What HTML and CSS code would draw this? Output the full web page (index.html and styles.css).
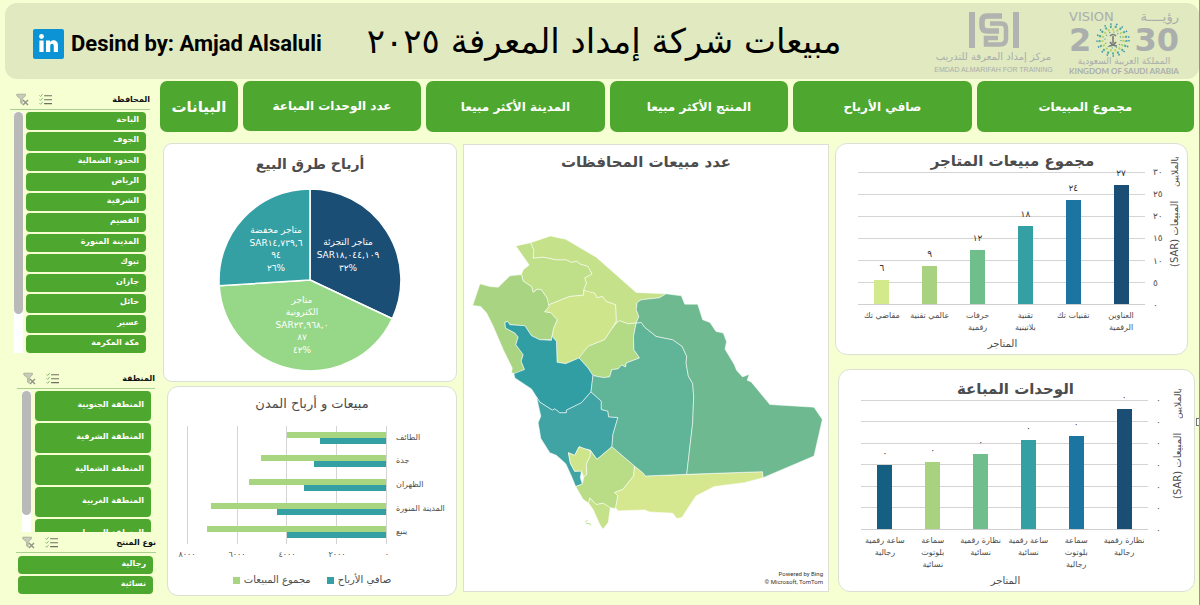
FILE: index.html
```html
<!DOCTYPE html>
<html lang="ar">
<head>
<meta charset="utf-8">
<meta name="viewport" content="width=device-width, initial-scale=1">
<title>مبيعات شركة إمداد المعرفة ٢٠٢٥</title>
<link rel="stylesheet" href="styles.css">
</head>
<body>
<svg class="sprite" aria-hidden="true">
  <symbol id="clear" viewBox="0 0 13 13">
    <path d="M.8 1.2h8.6v1.6L6.2 6v5.2L4.6 10V6L.8 2.800z" fill="#c9cbb9" stroke="#a5a796" stroke-width=".8"/>
    <path d="M7 7l5 5M12 7l-5 5" stroke="#8f9183" stroke-width="1.400"/>
  </symbol>
  <symbol id="multi" viewBox="0 0 14 13">
    <path d="M5.500 2.500H14M5.500 6.700H14M5.500 10.900H14" stroke="#6d7061" stroke-width="1.200"/>
    <path d="M.5 2l1.300 1.300L4 .6M.5 6.200l1.300 1.300L4 4.800M.5 10.400l1.300 1.300L4 9" fill="none" stroke="#86b870" stroke-width="1"/>
  </symbol>
</svg>

<header class="banner">
  <a class="author" href="#">
    <svg class="linkedin" viewBox="0 0 31 30" aria-hidden="true">
      <rect width="31" height="30" rx="2" fill="#0b93d6"/>
      <circle cx="8.500" cy="7.500" r="2.400" fill="#fff"/>
      <path d="M6.400 11.500h4.200V23H6.400zM13 11.500h4v1.600c2-3 8-2.500 8 3V23h-4.200v-6c0-3-3.600-3-3.600 0v6H13z" fill="#fff"/>
    </svg>
    <span>Desind by: Amjad Alsaluli</span>
  </a>
  <h1 dir="rtl">مبيعات شركة إمداد المعرفة ٢٠٢٥</h1>
  <div class="logos">
    <div class="emdad">
      <svg viewBox="0 0 52 36" aria-hidden="true">
        <g fill="none" stroke="#b0b3b0" stroke-width="6">
          <path d="M4 0v36M48 0v36"/>
          <path d="M34 4H19q-5 0-5 5v5q0 5 5 5h12" stroke-width="5.500"/>
          <path d="M22 11.500h11q5 0 5 5v10q0 6-6 6H18v-6.500h12" stroke-width="4.500"/>
        </g>
      </svg>
      <span class="emdad-ar" dir="rtl">مركز إمداد المعرفة للتدريب</span>
      <span class="emdad-en">EMDAD ALMARIFAH FOR TRAINING</span>
    </div>
    <div class="vision">
      <div class="vision-top"><span>VISION</span><span dir="rtl">رؤيــــة</span></div>
      <div class="vision-year">
        <span>2</span>
        <svg viewBox="-18 -18 36 36" aria-hidden="true">
          <g fill="none" stroke-width="2.200">
            <circle r="13.500" stroke="#4fae9c" stroke-dasharray="2 3"/>
            <circle r="10.500" stroke="#b8d25a" stroke-dasharray="1.800 2.600"/>
            <circle r="16" stroke="#3d8fb5" stroke-width="1.500" stroke-dasharray="1.500 4.500"/>
            <circle r="8" stroke="#5aa9a8" stroke-width="1.200" stroke-dasharray="1.200 3"/>
          </g>
          <path d="M0-4V3M-3-4q3-3 6 0M-4 6q4 0 7-4M4 6q-4 0-7-4" fill="none" stroke="#777c78" stroke-width="1.600"/>
        </svg>
        <span>30</span>
      </div>
      <div class="vision-ar" dir="rtl">المملكة العربية السعودية</div>
      <div class="vision-en">KINGDOM OF SAUDI ARABIA</div>
    </div>
  </div>
</header>

<div class="layout">
  <aside class="slicers">
    <section class="slicer slicer-province">
      <div class="slicer-head">
        <button class="tool" aria-label="مسح التصفية"><svg><use href="#clear"/></svg></button>
        <button class="tool" aria-label="تحديد متعدد"><svg><use href="#multi"/></svg></button>
        <h2>المحافظة</h2>
      </div>
      <div class="slicer-body">
        <div class="track"><div class="thumb"></div></div>
        <div class="options">
          <button>الباحة</button><button>الجوف</button><button>الحدود الشمالية</button><button>الرياض</button><button>الشرقية</button><button>القصيم</button><button>المدينة المنورة</button><button>تبوك</button><button>جازان</button><button>حائل</button><button>عسير</button><button>مكة المكرمة</button>
        </div>
      </div>
    </section>
    <section class="slicer slicer-region">
      <div class="slicer-head">
        <button class="tool" aria-label="مسح التصفية"><svg><use href="#clear"/></svg></button>
        <button class="tool" aria-label="تحديد متعدد"><svg><use href="#multi"/></svg></button>
        <h2>المنطقة</h2>
      </div>
      <div class="slicer-body">
        <div class="track"><div class="thumb"></div></div>
        <div class="options">
          <button>المنطقة الجنوبية</button><button>المنطقة الشرقية</button><button>المنطقة الشمالية</button><button>المنطقة الغربية</button><button>المنطقة الوسطى</button>
        </div>
      </div>
    </section>
    <section class="slicer slicer-type">
      <div class="slicer-head">
        <button class="tool" aria-label="مسح التصفية"><svg><use href="#clear"/></svg></button>
        <button class="tool" aria-label="تحديد متعدد"><svg><use href="#multi"/></svg></button>
        <h2>نوع المنتج</h2>
      </div>
      <div class="slicer-body">
        <div class="options"><button>رجالية</button><button>نسائية</button></div>
      </div>
    </section>
  </aside>

  <main class="main">
    <nav class="tabs">
      <button class="tab-data">البيانات</button>
      <button class="tab-units">عدد الوحدات المباعة</button>
      <button>المدينة الأكثر مبيعا</button>
      <button>المنتج الأكثر مبيعا</button>
      <button>صافي الأرباح</button>
      <button>مجموع المبيعات</button>
    </nav>

    <div class="board">
      <div class="col">
        <section class="card pie-card">
          <h2>أرباح طرق البيع</h2>
          <svg class="pie" viewBox="-92 -92 184 184" role="img" aria-label="أرباح طرق البيع">
            <g stroke="#fff" stroke-width="1.500">
              <path d="M0 0V-91A91 91 0 0 1 82.300 38.700Z" fill="#1a4e75"/>
              <path d="M0 0L82.300 38.700A91 91 0 0 1-90.800 5.700Z" fill="#97d888"/>
              <path d="M0 0L-90.800 5.700A91 91 0 0 1 0-91Z" fill="#34a0a3"/>
            </g>
            <g class="pie-text">
              <text x="38" y="-35">متاجر التجزئة</text>
              <text x="38" y="-22">SAR١٨,٠٤٤,١٠٩</text>
              <text x="38" y="-9">٣٢%</text>
              <text x="-34" y="-47">متاجر مخفضة</text>
              <text x="-34" y="-34">SAR١٤,٧٣٩,٦</text>
              <text x="-34" y="-22">٩٤</text>
              <text x="-34" y="-9">٢٦%</text>
              <text x="-8" y="23">متاجر</text>
              <text x="-8" y="35">الكترونية</text>
              <text x="-8" y="48">SAR٢٣,٩٦٨,٠</text>
              <text x="-8" y="60">٨٧</text>
              <text x="-8" y="73">٤٢%</text>
            </g>
          </svg>
        </section>

        <section class="card city-card">
          <h2>مبيعات و أرباح المدن</h2>
          <div class="city-chart">
            <div class="city-plot">
              <div class="pair"><i class="sales" style="width:50%"></i><i class="profit" style="width:33%"></i></div>
              <div class="pair"><i class="sales" style="width:63%"></i><i class="profit" style="width:36%"></i></div>
              <div class="pair"><i class="sales" style="width:69%"></i><i class="profit" style="width:41%"></i></div>
              <div class="pair"><i class="sales" style="width:88%"></i><i class="profit" style="width:55%"></i></div>
              <div class="pair"><i class="sales" style="width:90%"></i><i class="profit" style="width:50%"></i></div>
            </div>
            <div class="city-names"><span>الطائف</span><span>جدة</span><span>الظهران</span><span>المدينة المنورة</span><span>ينبع</span></div>
            <div class="city-ticks"><span>٨٠٠٠</span><span>٦٠٠٠</span><span>٤٠٠٠</span><span>٢٠٠٠</span><span>٠</span></div>
          </div>
          <div class="legend"><span><i class="sales"></i>مجموع المبيعات</span><span><i class="profit"></i>صافي الأرباح</span></div>
        </section>
      </div>

      <section class="card map-card">
        <h2>عدد مبيعات المحافظات</h2>
        <svg class="map" viewBox="12 270 1095 920" role="img" aria-label="خريطة المحافظات">
          <g stroke="#fff" stroke-opacity=".65" stroke-width="2.500" stroke-linejoin="round">
            <path fill="#c5e18a" d="M212 308L272 288 318 298 410 352 530 458 620 462 600 474 545 480 533 488 530 510 538 530 530 550 505 552 480 543 470 550 468 495 440 485 428 470 412 474 405 460 385 458 372 450 380 430 375 414 397 402 385 380 360 372 350 364 335 368 320 360 290 360 250 352 220 355 222 330Z"/>
            <path fill="#bfdf88" d="M168 318L212 308 222 330 220 355 250 352 290 360 320 360 335 368 350 364 360 372 385 380 397 402 375 414 380 430 372 450 372 466 330 470 265 496 262 475 245 450 232 448 220 458 215 440 190 424 185 402 190 390 208 375Z"/>
            <path fill="#a9d583" d="M185 404L190 424 215 440 220 458 232 448 245 450 262 475 268 500 255 516 272 518 293 540 282 565 275 600 240 600 215 588 195 558 150 555 143 545 135 548 137 565 165 580 175 592 168 615 190 645 184 665 194 690 165 702 155 700 157 685 130 630 100 560 80 520 62 500 38 497 60 432 90 440 115 442 150 408Z"/>
            <path fill="#cfe58b" d="M265 496L330 470 372 466 372 452 405 460 412 474 428 470 440 485 468 495 470 545 455 570 435 600 385 620 360 655 318 672 292 668 290 605 277 590 282 565 293 540 272 518 255 516 268 500Z"/>
            <path fill="#b3da85" d="M470 550L480 543 505 552 530 550 522 590 523 630 540 655 500 670 498 682 486 676 475 688 457 690 450 712 430 714 400 708 385 685 358 655 385 620 435 600 455 570Z"/>
            <path fill="#319ea3" d="M135 548L143 545 150 555 195 558 215 588 240 600 275 602 277 590 290 605 292 668 318 672 358 655 385 685 400 708 394 757 365 790 320 812 320 820 300 820 285 808 278 812 240 788 230 772 215 748 165 715 162 702 194 690 184 665 190 645 168 615 175 592 165 580 137 565Z"/>
            <path fill="#3fa4a3" d="M230 772L240 788 278 812 285 808 300 820 320 820 320 812 365 790 394 757 425 785 425 810 445 815 447 832 475 834 460 885 457 922 412 960 392 932 375 928 358 922 345 948 326 940 332 972 345 996 365 995 362 1015 368 1034 348 1042 335 1010 318 973 290 948 270 940 243 897 235 850 243 830Z"/>
            <path fill="#cfe58b" d="M358 922L375 928 392 934 392 950 380 975 382 1005 372 1014 365 995 345 996 332 972 326 940 345 948Z"/>
            <path fill="#b8dd86" d="M457 922L525 980 522 1010 490 1050 465 1060 475 1070 468 1108 450 1105 430 1092 410 1096 390 1076 387 1092 370 1080 348 1042 368 1034 372 1014 382 1005 380 975 392 950 392 934 412 960Z"/>
            <path fill="#c5e18a" d="M390 1076L410 1096 430 1092 452 1105 446 1150 430 1170 420 1155 400 1110 387 1092Z"/>
            <path fill="#d5e88f" d="M525 980L550 1000 558 1010 910 997 912 1015 855 1030 765 1042 710 1070 680 1115 668 1135 652 1138 640 1122 570 1118 555 1112 475 1115 468 1105 475 1070 465 1060 490 1050 522 1010Z"/>
            <path fill="#60b598" d="M530 550L545 548 555 562 590 590 640 600 668 620 682 650 680 670 687 710 700 732 703 770 700 850 682 1005 558 1010 550 1000 525 980 457 922 460 885 475 834 447 832 445 815 425 810 425 785 394 757 400 708 430 714 450 712 457 690 475 688 486 676 498 682 500 670 540 655 523 630 522 590Z"/>
            <path fill="#6eb98f" d="M600 474L620 462 666 468 676 493 715 493 730 540 752 548 770 575 792 580 802 606 797 628 825 675 832 692 850 712 870 704 864 722 876 727 932 795 1065 803 1090 840 1065 950 912 1015 910 997 682 1005 700 850 703 770 700 732 687 710 680 670 682 650 668 620 640 600 590 590 555 562 545 548 530 550 538 530 530 510 533 488 545 480Z"/>
            <path fill="none" stroke="#b8dd86" stroke-opacity="1" d="M376 1147l8-3M378 1152l14 2 1 5"/>
          </g>
        </svg>
        <p class="credit">Powered by Bing<br>© Microsoft, TomTom</p>
      </section>

      <div class="col col-right">
        <section class="card bar-card stores">
          <h2>مجموع مبيعات المتاجر</h2>
          <div class="bar-chart">
            <div class="plot">
              <div class="bar c6" style="height:18%"><b>٦</b></div>
              <div class="bar c5" style="height:29%"><b>٩</b></div>
              <div class="bar c4" style="height:41%"><b>١٢</b></div>
              <div class="bar c3" style="height:59%"><b>١٨</b></div>
              <div class="bar c2" style="height:79%"><b>٢٤</b></div>
              <div class="bar c1" style="height:90%"><b>٢٧</b></div>
            </div>
            <div class="ticks"><span>٣٠</span><span>٢٥</span><span>٢٠</span><span>١٥</span><span>١٠</span><span>٥</span><span>٠</span></div>
            <div class="side" dir="rtl"><span>بالملايين</span><span class="measure">المبيعات (SAR)</span></div>
            <div class="cats"><span>مقاضي تك</span><span>عالمي تقنية</span><span>حرفات<br>رقمية</span><span>تقنية<br>بلاتينية</span><span>تقنيات تك</span><span>العناوين<br>الرقمية</span></div>
          </div>
          <p class="axis">المتاجر</p>
        </section>

        <section class="card bar-card units">
          <h2>الوحدات المباعة</h2>
          <div class="bar-chart">
            <div class="plot">
              <div class="bar c7" style="height:50%"><b>٠</b></div>
              <div class="bar c5" style="height:52%"><b>٠</b></div>
              <div class="bar c4" style="height:58%"><b>٠</b></div>
              <div class="bar c3" style="height:69%"><b>٠</b></div>
              <div class="bar c2" style="height:72%"><b>٠</b></div>
              <div class="bar c1" style="height:93%"><b>٠</b></div>
            </div>
            <div class="ticks"><span>٠</span><span>٠</span><span>٠</span><span>٠</span><span>٠</span><span>٠</span><span>٠</span></div>
            <div class="side" dir="rtl"><span>بالملايين</span><span class="measure">المبيعات (SAR)</span></div>
            <div class="cats"><span>ساعة رقمية<br>رجالية</span><span>سماعة<br>بلوتوث<br>نسائية</span><span>نظارة رقمية<br>نسائية</span><span>ساعة رقمية<br>نسائية</span><span>سماعة<br>بلوتوث<br>رجالية</span><span>نظارة رقمية<br>رجالية</span></div>
          </div>
          <p class="axis">المتاجر</p>
        </section>
      </div>
    </div>
  </main>
</div>
<div class="handle"></div>
</body>
</html>
```
FILE: styles.css
```css
* { box-sizing: border-box; }
body {
  margin: 0;
  min-height: 100vh;
  padding: 3px 0 8px 5px;
  background: #f6ffd2;
  border-right: 1px solid #8f9a83;
  color: #4c4c4c;
  font-family: "DejaVu Sans", sans-serif;
  position: relative;
}
h1, h2, p { margin: 0; font-weight: normal; }
button { border: 0; padding: 0; font: inherit; color: inherit; background: none; cursor: pointer; }
.sprite { position: absolute; width: 0; height: 0; }

/* banner */
.banner {
  display: flex;
  align-items: center;
  height: 76px;
  padding: 0 20px 0 28px;
  background: #e0e9bf;
  border-radius: 12px;
}
.author {
  display: flex;
  align-items: center;
  gap: 7px;
  margin-top: 6px;
  color: #000;
  text-decoration: none;
  font: bold 22px/30px Roboto, "Liberation Sans", sans-serif;
  white-space: nowrap;
}
.linkedin { width: 31px; height: 30px; }
h1 {
  flex: 1;
  padding-left: 45px;
  color: #000;
  font-size: 34px;
  line-height: 40px;
  text-align: left;
  white-space: nowrap;
}
.logos { display: flex; gap: 15px; margin-top: 2px; color: #aaaead; }
.emdad { display: flex; flex-direction: column; align-items: center; width: 121px; white-space: nowrap; }
.emdad svg { width: 52px; height: 36px; margin-top: 3px; }
.emdad-ar { font-size: 10px; line-height: 18px; }
.emdad-en { font: 7px/8px "Liberation Sans", sans-serif; }
.vision { width: 110px; text-align: center; white-space: nowrap; }
.vision-top { display: flex; justify-content: space-between; font-size: 13px; line-height: 15px; }
.vision-year { display: flex; align-items: center; justify-content: space-between; font-size: 32px; line-height: 32px; font-weight: bold; }
.vision-year svg { width: 36px; height: 36px; margin: -2px 0; }
.vision-ar { font-size: 9px; line-height: 11px; }
.vision-en { font: bold 8px/9px Lato, sans-serif; }

.layout { display: flex; }

/* slicers */
.slicers { width: 155px; flex: none; padding-top: 11px; }
.slicer-head {
  display: flex;
  align-items: center;
  gap: 10px;
  height: 20px;
  padding-left: 6px;
  border-bottom: 1px solid #a9d08e;
}
.slicer-head h2 { flex: 1; color: #111; font-size: 8px; line-height: 14px; font-weight: bold; text-align: right; }
.tool { width: 13px; height: 13px; line-height: 0; }
.tool svg { width: 13px; height: 13px; }
.slicer-body { display: flex; gap: 3px; padding: 2px 4px 0; overflow: hidden; }
.track { width: 9px; background: #fff; }
.thumb { height: 84%; background: #b9b9b9; border-radius: 5px; }
.options { flex: 1; display: flex; flex-direction: column; gap: 2px; }
.options button {
  flex: 1 0 18px;
  padding: 0 7px 2px;
  border-radius: 4px;
  background: #4ea72e;
  color: #fff;
  font-size: 8px;
  line-height: 14px;
  font-weight: bold;
  text-align: start;
  direction: rtl;
}
.slicer-province { margin: 0 10px 0 5px; }
.slicer-province .slicer-body { height: 243px; }
.slicer-region { margin: 16px 5px 0 12px; }
.slicer-region .slicer-body { height: 143px; gap: 4px; padding-left: 5px; }
.slicer-region .options button { flex: 0 0 30px; }
.slicer-region .thumb { height: 88%; }
.slicer-type { margin: 1px 4px 0 11px; }
.slicer-type .slicer-body { padding: 3px 3px 0 2px; }

/* tabs */
.main { flex: 1; min-width: 0; padding: 2px 5px 0 0; }
.tabs { display: flex; gap: 5px; height: 51px; }
.tabs button {
  flex: 179 1 0;
  border-radius: 7px;
  background: #4ea72e;
  color: #fff;
  font-size: 12px;
  line-height: 20px;
  font-weight: bold;
  white-space: nowrap;
}
.tabs .tab-data { flex-grow: 78; font-size: 15px; }
.tabs button:last-child { flex-grow: 218; }
.tabs .tab-units { margin-bottom: 1px; }

/* board */
.board { display: grid; grid-template-columns: 294fr 366fr 359fr; gap: 6px; padding: 11px 0 0 3px; }
.col { display: flex; flex-direction: column; gap: 4px; min-width: 0; }
.col-right { gap: 14px; }
.card { background: #fff; border: 1px solid #dcdfd6; border-radius: 9px; }
.card h2 { text-align: center; direction: rtl; white-space: nowrap; }

.pie-card { display: flex; flex-direction: column; align-items: center; height: 239px; padding-top: 7px; }
.pie-card h2 { font-size: 14px; line-height: 26px; font-weight: bold; }
.pie { width: 184px; height: 184px; margin-top: 11px; }
.pie-text { fill: #fff; font-size: 9px; text-anchor: middle; }

.city-card { margin-left: 4px; padding: 7px 0 8px; border-radius: 11px; }
.city-card h2 { font-size: 13px; line-height: 20px; }
.city-chart { display: grid; grid-template-columns: 1fr 69px; padding: 12px 0 0 19px; font-size: 9px; line-height: 12px; }
.city-plot {
  display: flex;
  flex-direction: column;
  justify-content: space-around;
  height: 118px;
  border-right: 1px solid #d4d4d4;
  background: repeating-linear-gradient(90deg, #d4d4d4 0 1px, transparent 1px 25%);
}
.pair { display: flex; flex-direction: column; align-items: flex-end; }
.pair i { height: 6px; }
.sales { background: #a8d580; }
.profit { background: #34a0a3; }
.city-names { display: flex; flex-direction: column; justify-content: space-around; padding-left: 9px; white-space: nowrap; font-size: 8px; }
.city-ticks { display: flex; justify-content: space-between; margin: 5px -12px 0; }
.city-ticks span { width: 24px; text-align: center; font-size: 8px; }
.legend { display: flex; justify-content: center; gap: 16px; margin-top: 12px; font-size: 10px; line-height: 14px; }
.legend span { display: flex; align-items: center; gap: 4px; }
.legend i { width: 7px; height: 7px; }

.map-card { display: flex; flex-direction: column; margin: 1px 0 4px; border-radius: 0; }
.map-card h2 { margin-top: 5px; font-size: 15px; line-height: 24px; font-weight: bold; }
.map { width: 100%; margin-top: 56px; }
.credit { margin: auto 5px 5px; color: #333; font: 6px/8px Roboto, sans-serif; text-align: right; }

.bar-card { padding: 7px 6px 3px 22px; border-radius: 12px; }
.stores { margin-right: 6px; }
.units { margin-left: 3px; margin-right: -1px; padding: 8px 10px 3px 22px; }
.bar-card h2 { padding-right: 14px; font-size: 15px; line-height: 22px; font-weight: bold; }
.bar-chart { display: grid; grid-template-columns: 1fr 24px 12px; font-size: 9px; line-height: 12px; }
.plot {
  display: flex;
  justify-content: space-around;
  align-items: flex-end;
  height: 133px;
  border-bottom: 1px solid #cfcfcf;
  background: repeating-linear-gradient(180deg, #d4d4d4 0 1px, transparent 1px calc(100% / 6));
}
.bar { width: 15px; }
.bar b { display: flex; justify-content: center; height: 12px; margin-top: -18px; color: #333; font-weight: normal; }
.c1 { background: #1a4e75; }
.c2 { background: #1c74a0; }
.c3 { background: #34a0a3; }
.c4 { background: #70be8c; }
.c5 { background: #a8d27f; }
.c6 { background: #d4e88c; }
.c7 { background: #156082; }
.ticks { display: flex; flex-direction: column; justify-content: space-between; margin: -6px 0; padding-left: 8px; }
.side { display: flex; gap: 14px; margin-top: -16px; writing-mode: vertical-rl; transform: rotate(180deg); white-space: nowrap; font-size: 9px; }
.measure { font-size: 10px; }
.cats { display: grid; grid-template-columns: repeat(6, 1fr); margin-top: 5px; font-size: 8px; text-align: center; white-space: nowrap; }
.axis { font-size: 10px; line-height: 14px; text-align: center; padding-right: 34px; margin-top: 3px; }
.bar-card.stores { padding-top: 6px; }
.units .plot { height: 130px; }
.units .side { margin-top: -12px; }

.handle { position: absolute; right: -1px; top: 418px; width: 4px; height: 8px; border: 1px solid #6f776a; border-right: 0; background: #fff; }
```
